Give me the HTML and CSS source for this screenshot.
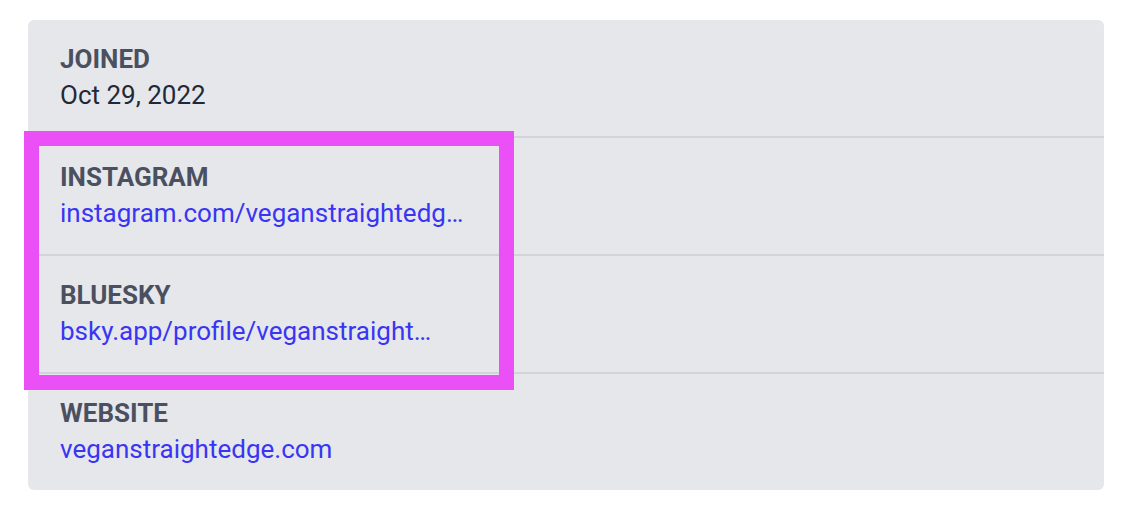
FILE: index.html
```html
<!DOCTYPE html>
<html lang="en">
<head>
    <meta charset="UTF-8">
    <meta name="viewport" content="width=device-width, initial-scale=1.0">
    <title>Profile Details</title>
    <link rel="stylesheet" href="styles.css">
</head>
<body>
    <div class="card">
        <div class="row">
            <div class="label">Joined</div>
            <div class="value">Oct 29, 2022</div>
        </div>
        <div class="row">
            <div class="label">Instagram</div>
            <a class="value link" href="#">instagram.com/veganstraightedg…</a>
        </div>
        <div class="row">
            <div class="label">Bluesky</div>
            <a class="value link" href="#">bsky.app/profile/veganstraight…</a>
        </div>
        <div class="row">
            <div class="label">Website</div>
            <a class="value link" href="#">veganstraightedge.com</a>
        </div>
        <div class="highlight"></div>
    </div>
</body>
</html>
```

FILE: styles.css
```css
body {
    font-family: Roboto, 'Noto Sans', sans-serif;
    margin: 0;
    padding: 20px 32px 0 28px;
    background-color: #ffffff;
    color: #1f2937;
}

.card {
    position: relative;
    width: 1076px;
    background-color: #e5e7eb;
    border-radius: 6px;
}

.row {
    display: flex;
    flex-direction: column;
    align-items: flex-start;
    padding: 21px 32px 23px;
}

.row + .row {
    border-top: 2px solid #d1d5db;
}

.label {
    font-size: 26px;
    line-height: 36px;
    font-weight: 700;
    text-transform: uppercase;
    color: #4b5060;
}

.value {
    font-size: 26px;
    line-height: 36px;
    color: #1f2937;
}

.link {
    color: #3935f2;
    text-decoration: none;
}

/* annotation box drawn over the social links */
.highlight {
    position: absolute;
    left: -4px;
    top: 111px;
    width: 460px;
    height: 229px;
    border: 15px solid #ea50f5;
}
```
